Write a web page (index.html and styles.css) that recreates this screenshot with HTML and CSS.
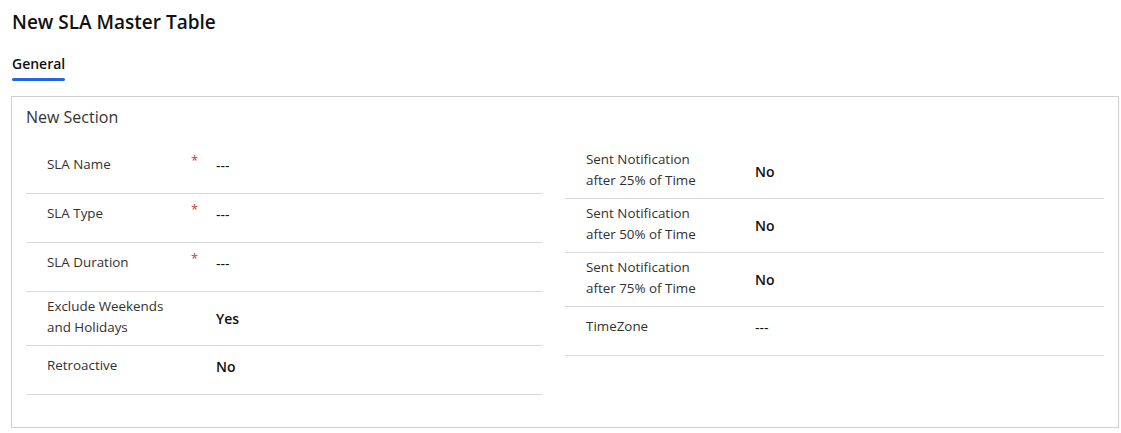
FILE: index.html
```html
<!DOCTYPE html>
<html>
<head>
<meta charset="utf-8">
<link rel="stylesheet" href="styles.css">
</head>
<body>
<div class="page">
  <h1 class="title">New SLA Master Table</h1>
  <div class="tabs">
    <div class="tab active">General</div>
  </div>
  <section class="section">
    <h2 class="section-title">New Section</h2>
    <div class="columns">
      <div class="column left">
        <div class="row"><div class="field">
          <div class="label">SLA Name</div><div class="req">*</div>
          <div class="value">---</div>
        </div></div>
        <div class="row"><div class="field">
          <div class="label">SLA Type</div><div class="req">*</div>
          <div class="value">---</div>
        </div></div>
        <div class="row"><div class="field">
          <div class="label">SLA Duration</div><div class="req">*</div>
          <div class="value">---</div>
        </div></div>
        <div class="row"><div class="field">
          <div class="label">Exclude Weekends<br>and Holidays</div><div class="req"></div>
          <div class="value bold">Yes</div>
        </div></div>
        <div class="row"><div class="field">
          <div class="label">Retroactive</div><div class="req"></div>
          <div class="value bold">No</div>
        </div></div>
      </div>
      <div class="column right">
        <div class="row"><div class="field">
          <div class="label">Sent Notification<br>after 25% of Time</div><div class="req"></div>
          <div class="value bold">No</div>
        </div></div>
        <div class="row"><div class="field">
          <div class="label">Sent Notification<br>after 50% of Time</div><div class="req"></div>
          <div class="value bold">No</div>
        </div></div>
        <div class="row"><div class="field">
          <div class="label">Sent Notification<br>after 75% of Time</div><div class="req"></div>
          <div class="value bold">No</div>
        </div></div>
        <div class="row"><div class="field">
          <div class="label">TimeZone</div><div class="req"></div>
          <div class="value">---</div>
        </div></div>
      </div>
    </div>
  </section>
</div>
</body>
</html>
```

FILE: styles.css
```css
* { box-sizing: border-box; }
html, body { margin: 0; padding: 0; background: #fff; }
body {
  font-family: "Open Sans", "Noto Sans", "Liberation Sans", sans-serif;
  color: #242424;
}
.page {
  padding: 8px 2px 0 11px;
  width: 1121px;
}
.title {
  margin: 0 0 0 1px;
  font-size: 19px;
  font-weight: 600;
  line-height: 28px;
  color: #111;
}
.tabs {
  display: flex;
  margin: 18px 0 0 1px;
  height: 42px;
}
.tab {
  position: relative;
  font-size: 14px;
  font-weight: 600;
  line-height: 20px;
  color: #111;
  height: 28px;
}
.tab.active::after {
  content: "";
  position: absolute;
  left: 0;
  right: 0;
  top: 24px;
  height: 3px;
  border-radius: 2px;
  background: #2266e3;
}
.section {
  margin-top: 0;
  border: 1px solid #cfcfcf;
  height: 332px;
  padding: 0 14px 0 14px;
}
.section-title {
  margin: 0;
  padding-top: 9px;
  font-size: 16px;
  font-weight: 400;
  line-height: 22px;
  color: #333;
  height: 48px;
}
.columns {
  display: grid;
  grid-template-columns: 1fr 1fr;
}
.column.left { padding-right: 22px; }
.row {
  min-height: 49px;
  padding: 4px 0 7px 21px;
  border-bottom: 1px solid #d9d9d9;
}
.field {
  display: flex;
  align-items: stretch;
  min-height: 31px;
}
.label {
  width: 144px;
  display: flex;
  align-items: center;
  font-size: 13.4px;
  line-height: 21px;
  color: #323130;
}
.req {
  width: 25px;
  display: flex;
  align-items: center;
  color: #d13438;
  font-size: 13px;
  padding-bottom: 9px;
}
.value {
  display: flex;
  align-items: center;
  font-size: 14px;
  color: #111;
  padding-top: 2px;
}
.value.bold { font-weight: 600; }
```
